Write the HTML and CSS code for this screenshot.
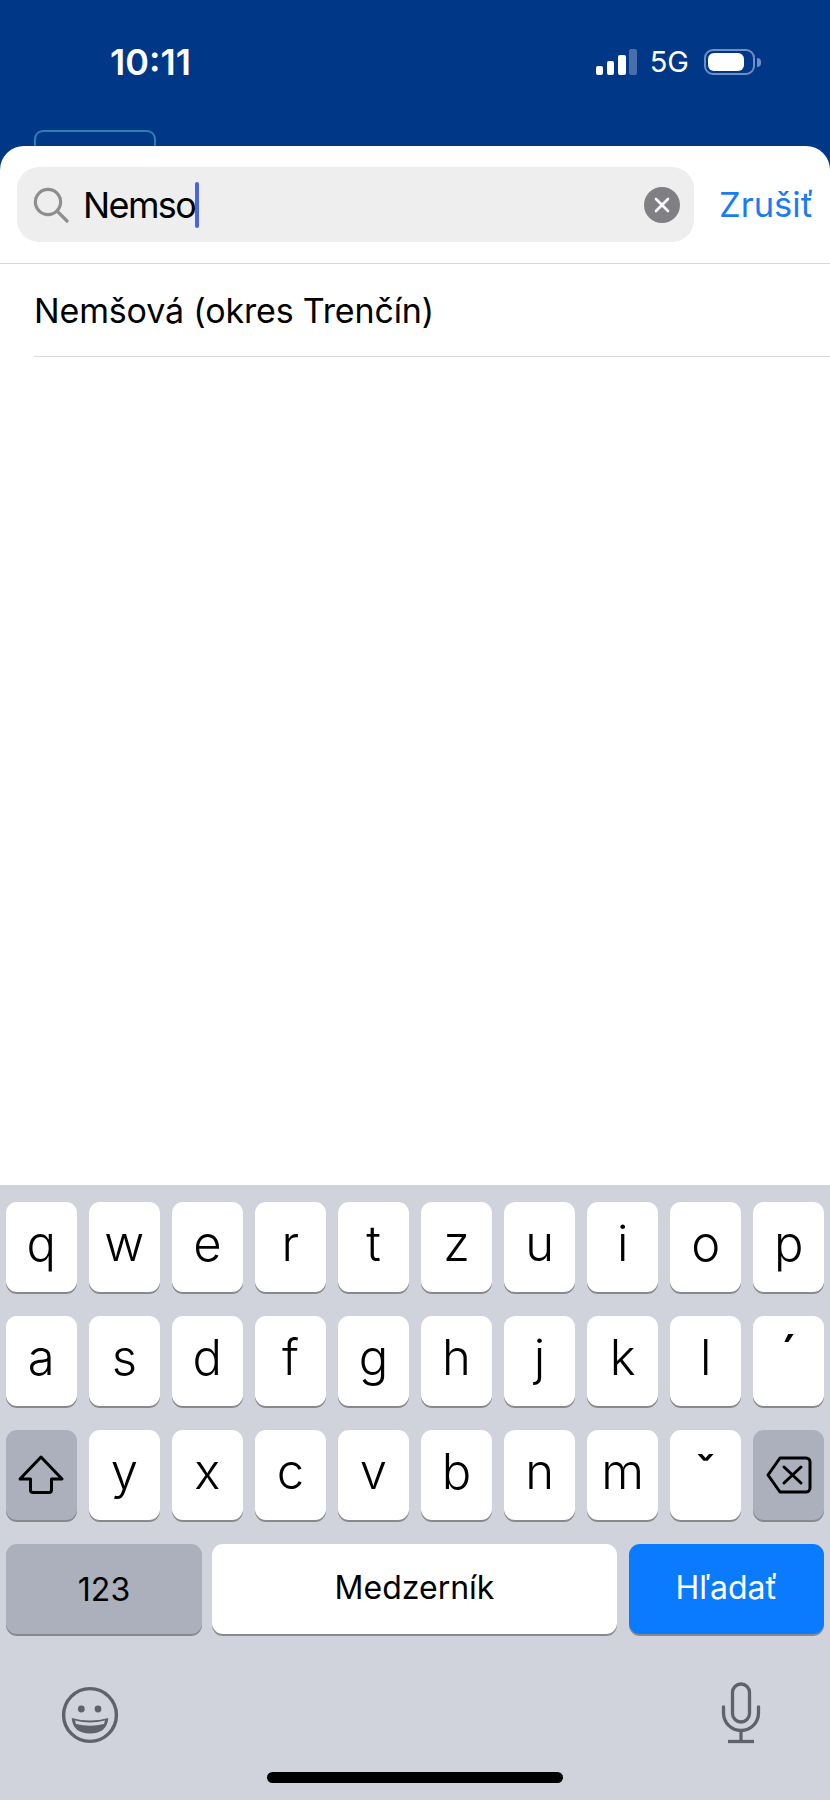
FILE: index.html
```html
<!DOCTYPE html>
<html lang="sk">
<head>
  <meta charset="UTF-8" />
  <meta name="viewport" content="width=device-width, initial-scale=1.0"/>
  <title>Hľadať</title>
  <link rel="stylesheet" href="styles.css">
</head>
<body>
  <div class="phone">
    <header class="top">
      <div class="status">
        <span class="time">10:11</span>
        <div class="status-right">
          <div class="signal"><i class="b1"></i><i class="b2"></i><i class="b3"></i><i class="b4"></i></div>
          <span class="net">5G</span>
          <div class="battery"><div class="battery-fill"></div></div>
          <div class="battery-tip"></div>
        </div>
      </div>
      <div class="tab-peek"></div>
    </header>

    <main class="sheet">
      <div class="search-row">
        <div class="search-box">
          <svg class="search-icon" width="36" height="36" viewBox="0 0 36 36" fill="none" stroke="#8e8e90" stroke-width="3.2" stroke-linecap="round">
            <circle cx="15" cy="15" r="12.6"/>
            <path d="M24.4 24.4 34 34"/>
          </svg>
          <span class="search-text">Nemso</span><span class="caret"></span>
          <div class="clear">
            <svg width="16" height="16" viewBox="0 0 16 16" stroke="#fff" stroke-width="2.6" stroke-linecap="round">
              <path d="M2 2l12 12M14 2 2 14"/>
            </svg>
          </div>
        </div>
        <span class="cancel">Zrušiť</span>
      </div>
      <div class="result">Nemšová (okres Trenčín)</div>
    </main>

    <section class="keyboard">
      <div class="keys">
        <div class="key">q</div><div class="key">w</div><div class="key">e</div><div class="key">r</div><div class="key">t</div>
        <div class="key">z</div><div class="key">u</div><div class="key">i</div><div class="key">o</div><div class="key">p</div>

        <div class="key">a</div><div class="key">s</div><div class="key">d</div><div class="key">f</div><div class="key">g</div>
        <div class="key">h</div><div class="key">j</div><div class="key">k</div><div class="key">l</div><div class="key mark">´</div>

        <div class="key gray">
          <svg width="46" height="40" viewBox="0 0 46 40" fill="none" stroke="#000" stroke-width="3" stroke-linejoin="round">
            <path d="M23 2 44 24H33.5V35a2.5 2.5 0 0 1-2.5 2.5H15a2.5 2.5 0 0 1-2.5-2.5V24H2Z"/>
          </svg>
        </div>
        <div class="key">y</div><div class="key">x</div><div class="key">c</div><div class="key">v</div>
        <div class="key">b</div><div class="key">n</div><div class="key">m</div><div class="key mark caron">ˇ</div>
        <div class="key gray">
          <svg width="46" height="38" viewBox="0 0 46 38" fill="none" stroke="#000" stroke-width="3" stroke-linejoin="round" stroke-linecap="round">
            <path d="M14 2H40a4 4 0 0 1 4 4V32a4 4 0 0 1-4 4H14L2 19Z"/>
            <path d="M18 11 35 27M35 11 18 27"/>
          </svg>
        </div>
      </div>

      <div class="bottom-row">
        <div class="key gray num small">123</div>
        <div class="key space small">Medzerník</div>
        <div class="key blue small">Hľadať</div>
      </div>

      <div class="tools">
        <svg width="58" height="58" viewBox="0 0 58 58" fill="none" stroke="#5f626a" stroke-width="3.4">
          <circle cx="29" cy="29" r="26.4"/>
          <circle cx="20.3" cy="23" r="3.4" fill="#5f626a" stroke="none"/>
          <circle cx="37" cy="23" r="3.4" fill="#5f626a" stroke="none"/>
          <path d="M10.7 32Q29 37 47.3 32Q46 47.5 29 47.5Q12 47.5 10.7 32Z" fill="#5f626a" stroke="none"/>
          <path d="M14 34.6Q29 38.6 44 34.6L43 38Q29 41.4 15 38Z" fill="#d0d3dc" stroke="none"/>
        </svg>
        <svg width="42" height="62" viewBox="0 0 42 62" fill="none" stroke="#5f626a" stroke-width="3.3" stroke-linecap="round">
          <rect x="12.5" y="2" width="17" height="38" rx="8.5"/>
          <path d="M3.5 25v6a17.5 17.5 0 0 0 35 0v-6"/>
          <path d="M21 49v10" stroke-linecap="butt"/>
          <path d="M8 59.5h26" stroke-linecap="butt"/>
        </svg>
      </div>

      <div class="home-bar"></div>
    </section>
  </div>
</body>
</html>
```

FILE: styles.css
```css
* {
  box-sizing: border-box;
}

body {
  margin: 0;
  background: #fff;
  font-family: Inter, "Liberation Sans", sans-serif;
  color: #000;
}

.phone {
  width: 830px;
  height: 1800px;
  display: flex;
  flex-direction: column;
  overflow: hidden;
  background: #003887;
}

/* blue app header behind the search sheet */
.top {
  height: 146px;
  display: flex;
  flex-direction: column;
  justify-content: space-between;
}

.status {
  display: flex;
  justify-content: space-between;
  align-items: center;
  padding: 46px 69px 0 110px;
  color: #fff;
}

.time {
  font-size: 36px;
  font-weight: 600;
  line-height: 32px;
}

.status-right {
  display: flex;
  align-items: center;
}

.signal {
  display: flex;
  align-items: flex-end;
  gap: 3.7px;
  height: 26px;
}

.signal i {
  display: block;
  width: 7.5px;
  border-radius: 2px;
  background: #fff;
}

.signal .b1 { height: 9px; }
.signal .b2 { height: 14px; }
.signal .b3 { height: 20px; }
.signal .b4 { height: 26px; background: #4a6ea9; }

.net {
  font-size: 29px;
  font-weight: 400;
  margin: 0 15px 0 13px;
  line-height: 26px;
}

.battery {
  width: 51px;
  height: 26px;
  border: 2px solid #6f8fc4;
  border-radius: 9px;
  padding: 2px;
}

.battery-fill {
  width: 36px;
  height: 18px;
  background: #fff;
  border-radius: 6px;
}

.battery-tip {
  width: 4px;
  height: 9px;
  margin-left: 2px;
  background: #6f8fc4;
  border-radius: 0 4px 4px 0;
}

.tab-peek {
  width: 122px;
  height: 16px;
  margin-left: 34px;
  border: 2px solid #2f7fb0;
  border-bottom: none;
  border-radius: 9px 9px 0 0;
}

/* search sheet */
.sheet {
  flex: 1;
  background: #fff;
  border-radius: 24px 24px 0 0;
}

.search-row {
  display: flex;
  align-items: center;
  height: 118px;
  padding: 21px 0 21px 17px;
  border-bottom: 1px solid #d9d9dc;
}

.search-box {
  width: 677px;
  flex: none;
  height: 75px;
  background: #eeeeee;
  border-radius: 22px;
  display: flex;
  align-items: center;
  padding-left: 16px;
  padding-right: 14px;
}

.search-icon {
  flex: none;
}

.search-text {
  font-size: 36px;
  margin-left: 14px;
  line-height: 44px;
  letter-spacing: -1.6px;
}

.caret {
  width: 4px;
  height: 46px;
  background: #4a63e0;
  border-radius: 2px;
}

.clear {
  width: 36px;
  height: 36px;
  margin-left: auto;
  border-radius: 50%;
  background: #808084;
  display: flex;
  align-items: center;
  justify-content: center;
}

.cancel {
  font-size: 34.5px;
  color: #1a7cf0;
  margin-left: 25px;
}

.result {
  margin-left: 34px;
  height: 93px;
  font-size: 34px;
  letter-spacing: -0.15px;
  display: flex;
  align-items: center;
  border-bottom: 1px solid #d9d9dc;
}

/* keyboard */
.keyboard {
  height: 615px;
  background: #d0d3dc;
  padding: 17px 6px 0;
  position: relative;
}

.keys {
  display: grid;
  grid-template-columns: repeat(10, 1fr);
  grid-auto-rows: 90px;
  column-gap: 12.5px;
  row-gap: 24px;
}

.key {
  background: #fff;
  border-radius: 11px;
  box-shadow: 0 2px 0 #88898d;
  display: flex;
  align-items: center;
  justify-content: center;
  font-size: 49px;
  font-weight: 300;
  padding-bottom: 8px;
}

.key.mark {
  font-size: 56px;
  font-weight: 400;
}

.key.caron {
  font-size: 50px;
  padding-bottom: 3px;
}

.key.gray {
  background: #abb0bc;
  padding-bottom: 0;
}

.bottom-row {
  display: flex;
  gap: 10px;
  margin-top: 24px;
  height: 90px;
}

.key.small {
  font-size: 32px;
  font-weight: 400;
  padding-bottom: 4px;
}

.key.num {
  width: 196px;
  flex: none;
  padding-bottom: 0;
}

.key.space {
  flex: 1;
}

.key.blue {
  width: 195px;
  flex: none;
  background: #0a7aff;
  color: #fff;
  margin-left: 2px;
}

.tools {
  display: flex;
  justify-content: space-between;
  align-items: flex-end;
  padding: 48px 62.5px 0 55px;
}

.home-bar {
  position: absolute;
  left: 267px;
  bottom: 17px;
  width: 296px;
  height: 11px;
  border-radius: 6px;
  background: #000;
}
```
